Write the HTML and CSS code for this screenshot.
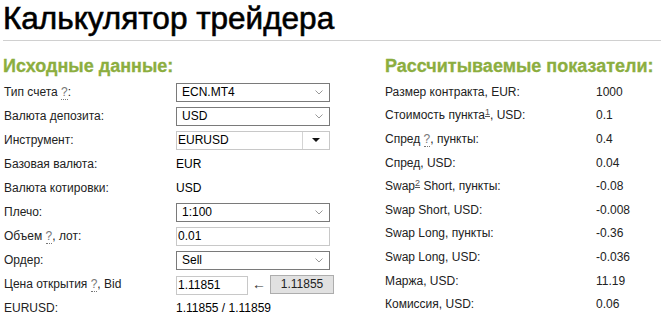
FILE: index.html
```html
<!DOCTYPE html>
<html lang="ru">
<head>
<meta charset="UTF-8" />
<title>Калькулятор трейдера</title>
<link rel="stylesheet" href="styles.css">
</head>
<body>

<h1 class="title">Калькулятор трейдера</h1>
<hr class="divider">

<div class="columns">
  <!-- исходные данные -->
  <section class="panel">
    <h2>Исходные данные:</h2>
    <div class="form-row">
      <label>Тип счета <span class="hint">?</span>:</label>
      <select class="field"><option>ECN.MT4</option></select>
    </div>
    <div class="form-row">
      <label>Валюта депозита:</label>
      <select class="field"><option>USD</option></select>
    </div>
    <div class="form-row">
      <label>Инструмент:</label>
      <div class="combo">
        <span class="combo-text">EURUSD</span>
        <span class="combo-btn"><span class="triangle"></span></span>
      </div>
    </div>
    <div class="form-row">
      <label>Базовая валюта:</label>
      <span class="plain">EUR</span>
    </div>
    <div class="form-row">
      <label>Валюта котировки:</label>
      <span class="plain">USD</span>
    </div>
    <div class="form-row">
      <label>Плечо:</label>
      <select class="field"><option>1:100</option></select>
    </div>
    <div class="form-row">
      <label>Объем <span class="hint">?</span>, лот:</label>
      <input class="text-input" type="text" value="0.01">
    </div>
    <div class="form-row">
      <label>Ордер:</label>
      <select class="field"><option>Sell</option></select>
    </div>
    <div class="form-row">
      <label>Цена открытия <span class="hint">?</span>, Bid</label>
      <div class="price-group">
        <input class="text-input price-input" type="text" value="1.11851">
        <span class="arrow">&larr;</span>
        <button class="price-btn">1.11855</button>
      </div>
    </div>
    <div class="form-row">
      <label>EURUSD:</label>
      <span class="plain">1.11855 / 1.11859</span>
    </div>
  </section>

  <!-- результаты -->
  <section class="panel">
    <h2>Рассчитываемые показатели:</h2>
    <div class="result-row"><span>Размер контракта, EUR:</span><span>1000</span></div>
    <div class="result-row"><span>Стоимость пункта<sup class="note">1</sup>, USD:</span><span>0.1</span></div>
    <div class="result-row"><span>Спред <span class="hint">?</span>, пункты:</span><span>0.4</span></div>
    <div class="result-row"><span>Спред, USD:</span><span>0.04</span></div>
    <div class="result-row"><span>Swap<sup class="note">2</sup> Short, пункты:</span><span>-0.08</span></div>
    <div class="result-row"><span>Swap Short, USD:</span><span>-0.008</span></div>
    <div class="result-row"><span>Swap Long, пункты:</span><span>-0.36</span></div>
    <div class="result-row"><span>Swap Long, USD:</span><span>-0.036</span></div>
    <div class="result-row"><span>Маржа, USD:</span><span>11.19</span></div>
    <div class="result-row"><span>Комиссия, USD:</span><span>0.06</span></div>
  </section>
</div>

</body>
</html>
```

FILE: styles.css
```css
body {
  font-family: "Liberation Sans", Arial, sans-serif;
  font-size: 12px;
  color: #222;
  background-color: #fff;
  margin: 0;
  padding: 0 0 0 3px;
}
.title {
  font-size: 31.5px;
  font-weight: normal;
  line-height: 36px;
  margin: 0;
  color: #000;
  -webkit-text-stroke: 0.6px #000;
  white-space: nowrap;
}
.divider {
  border: none;
  border-top: 1px solid #d0d0d0;
  margin: 4px 0 0 0;
}
.columns {
  display: grid;
  grid-template-columns: 332px 1fr;
  gap: 50px;
  margin-top: 13px;
}
h2 {
  font-size: 18px;
  font-weight: bold;
  line-height: 24px;
  margin: 0 0 2px 0;
  color: #8cae3f;
  white-space: nowrap;
  -webkit-text-stroke: 0.3px #8cae3f;
}
.form-row {
  display: grid;
  grid-template-columns: 172px 154px;
  align-items: center;
  height: 24px;
  padding-left: 1px;
  white-space: nowrap;
}
.result-row {
  display: grid;
  grid-template-columns: 211px 1fr;
  align-items: center;
  height: 23.6px;
  white-space: nowrap;
}
.hint {
  color: #777;
  border-bottom: 1px dotted #777;
}
.note {
  font-size: 9px;
  color: #555;
  text-decoration: underline;
  vertical-align: 4px;
  line-height: 0;
}
.field {
  appearance: none;
  -webkit-appearance: none;
  font-family: inherit;
  font-size: 12px;
  color: #000;
  height: 19px;
  padding: 0 0 0 5px;
  border: 1px solid #7a7a7a;
  border-radius: 0;
  background: #fff url("data:image/svg+xml,%3Csvg xmlns='http://www.w3.org/2000/svg' width='8' height='5'%3E%3Cpath d='M0.5 0.5 L4 4 L7.5 0.5' fill='none' stroke='%23999' stroke-width='1'/%3E%3C/svg%3E") no-repeat right 6px center;
}
.text-input {
  font-family: inherit;
  font-size: 12px;
  color: #000;
  height: 19px;
  box-sizing: border-box;
  padding: 0 1px;
  border: 1px solid #c8c8c8;
  border-radius: 0;
  outline: none;
}
.combo {
  display: flex;
  height: 19px;
  box-sizing: border-box;
  border: 1px solid #c8c8c8;
  background-color: #fff;
}
.combo-text {
  flex: 1;
  padding-left: 1px;
  line-height: 17px;
  color: #000;
}
.combo-btn {
  width: 26px;
  border-left: 1px solid #d4d4d4;
  display: flex;
  align-items: center;
  justify-content: center;
}
.triangle {
  width: 0;
  height: 0;
  border-left: 4px solid transparent;
  border-right: 4px solid transparent;
  border-top: 4px solid #111;
}
.plain {
  color: #000;
}
.price-group {
  display: flex;
  align-items: center;
  width: 160px;
}
.price-input {
  width: 72px;
  margin-top: 2px;
}
.arrow {
  width: 22px;
  text-align: center;
  font-size: 14px;
  color: #333;
}
.price-btn {
  font-family: inherit;
  font-size: 12px;
  color: #222;
  width: 64px;
  height: 19px;
  padding: 0;
  background-color: #e1e1e1;
  border: 1px solid #adadad;
  border-radius: 0;
}
```
